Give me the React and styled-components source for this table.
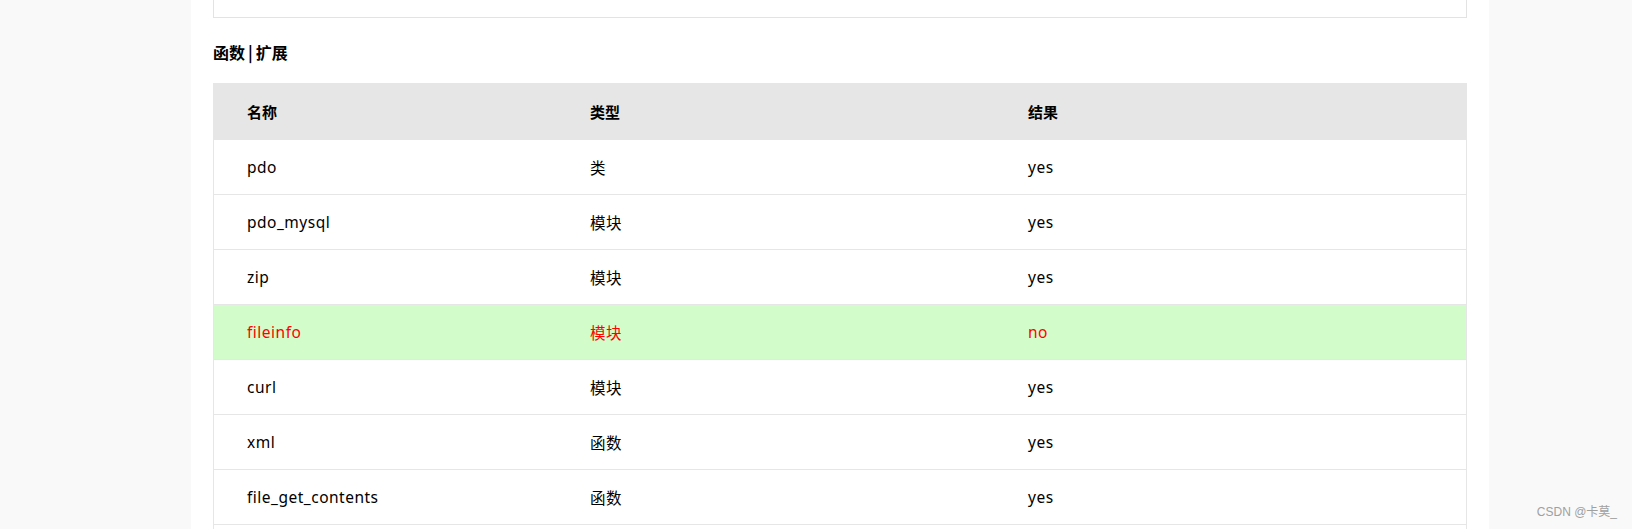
import React from "react"
import styled, { createGlobalStyle } from "styled-components"

const GlobalStyle = createGlobalStyle`
  html, body {
    margin: 0;
    padding: 0;
    background: #f9f9f9;
  }
  body {
    font-family: "Noto Sans", "Noto Sans CJK SC", sans-serif;
    color: #000;
  }
`

const Page = styled.div`
  height: 529px;
  overflow: hidden;
  position: relative;
`

const Panel = styled.div`
  margin-left: 191px;
  width: 1298px;
  height: 100%;
  box-sizing: border-box;
  padding: 0 22px;
  background: #fff;
`

const TopCard = styled.div`
  height: 17px;
  border: 1px solid #e3e3e3;
  border-top: none;
`

const Heading = styled.h3`
  margin: 22px 0 19px;
  font-size: 16px;
  line-height: 24px;
  font-weight: bold;
  font-family: "Noto Sans CJK SC", sans-serif;
`

const Pipe = styled.span`
  margin: 0 3px;
`

const Table = styled.div`
  border-left: 1px solid #e6e6e6;
  border-right: 1px solid #e6e6e6;
`

const Row = styled.div`
  display: grid;
  grid-template-columns: 343px 438px 1fr;
  align-items: center;
  height: ${p => (p.head ? "57px" : "54px")};
  border-bottom: ${p => (p.head ? "none" : "1px solid #e6e6e6")};
  background: ${p => (p.head ? "#e6e6e6" : p.bad ? "#d3fccb" : "#fff")};
  color: ${p => (p.bad ? "#ff0000" : "#000")};
  font-size: ${p => (p.head ? "15px" : "15.5px")};
  letter-spacing: ${p => (p.head ? "0" : "0.5px")};
  font-weight: ${p => (p.head ? "bold" : "normal")};
`

const Cell = styled.div`
  padding-left: 33px;
  white-space: nowrap;
`

const Watermark = styled.div`
  position: absolute;
  right: 15px;
  bottom: 10px;
  font-size: 12px;
  color: #a0a0a0;
  font-family: "Liberation Sans", "Noto Sans CJK SC", sans-serif;
`

const rows = [
  ["pdo", "类", "yes"],
  ["pdo_mysql", "模块", "yes"],
  ["zip", "模块", "yes"],
  ["fileinfo", "模块", "no"],
  ["curl", "模块", "yes"],
  ["xml", "函数", "yes"],
  ["file_get_contents", "函数", "yes"],
  ["", "", ""],
]

const App = () => {
  return <Page>
    <GlobalStyle />
    <Panel>
      <TopCard />
      <Heading>函数<Pipe>|</Pipe>扩展</Heading>
      <Table>
        <Row head>
          <Cell>名称</Cell>
          <Cell>类型</Cell>
          <Cell>结果</Cell>
        </Row>
        {rows.map((r, i) =>
          <Row key={i} bad={r[2] === "no"}>
            <Cell>{r[0]}</Cell>
            <Cell>{r[1]}</Cell>
            <Cell>{r[2]}</Cell>
          </Row>
        )}
      </Table>
    </Panel>
    <Watermark>CSDN @卡莫_</Watermark>
  </Page>
}

export default App
